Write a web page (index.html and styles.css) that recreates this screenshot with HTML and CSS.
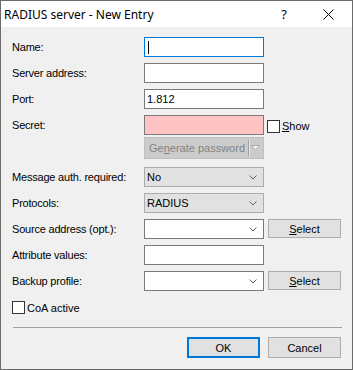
FILE: index.html
```html
<!DOCTYPE html>
<html lang="en">
<head>
    <meta charset="UTF-8">
    <title>RADIUS server - New Entry</title>
    <link rel="stylesheet" href="styles.css">
</head>
<body>
    <div class="window">
        <div class="titlebar">
            <span class="title">RADIUS server - New Entry</span>
            <span class="help">?</span>
            <svg class="close" width="11" height="11" viewBox="0 0 11 11">
                <path d="M0.5 0.5 L10.5 10.5 M10.5 0.5 L0.5 10.5" stroke="#000" stroke-width="1" fill="none"/>
            </svg>
        </div>

        <div class="content">
            <div class="row">
                <span class="label">Name:</span>
                <div class="input focused"><span class="caret"></span></div>
            </div>
            <div class="row">
                <span class="label">Server address:</span>
                <div class="input"></div>
            </div>
            <div class="row">
                <span class="label">Port:</span>
                <div class="input">1.812</div>
            </div>
            <div class="row">
                <span class="label">Secret:</span>
                <div class="input secret"></div>
                <div class="check-wrap show">
                    <span class="checkbox"></span>
                    <span><u>S</u>how</span>
                </div>
            </div>
            <div class="row gen-row">
                <span></span>
                <div class="split-btn">
                    <span class="split-text">Ge<u>n</u>erate password</span>
                    <span class="split-sep"></span>
                    <svg class="split-arrow" width="9" height="6" viewBox="0 0 9 6">
                        <polygon points="0.5,0.5 8.5,0.5 4.5,5" fill="#f4f4f4" stroke="#a8a8a8" stroke-width="1"/>
                    </svg>
                </div>
            </div>
            <div class="row after-gen">
                <span class="label">Message auth. required:</span>
                <div class="dropdown">No
                    <svg class="chev" width="8" height="5" viewBox="0 0 8 5"><polyline points="0.5,0.5 4,4 7.5,0.5" fill="none" stroke="#606060"/></svg>
                </div>
            </div>
            <div class="row">
                <span class="label">Protocols:</span>
                <div class="dropdown">RADIUS
                    <svg class="chev" width="8" height="5" viewBox="0 0 8 5"><polyline points="0.5,0.5 4,4 7.5,0.5" fill="none" stroke="#606060"/></svg>
                </div>
            </div>
            <div class="row">
                <span class="label">Source address (opt.):</span>
                <div class="input combo">
                    <svg class="chev" width="8" height="5" viewBox="0 0 8 5"><polyline points="0.5,0.5 4,4 7.5,0.5" fill="none" stroke="#606060"/></svg>
                </div>
                <div class="button select"><u>S</u>elect</div>
            </div>
            <div class="row">
                <span class="label">Attribute values:</span>
                <div class="input"></div>
            </div>
            <div class="row">
                <span class="label">Backup profile:</span>
                <div class="input combo">
                    <svg class="chev" width="8" height="5" viewBox="0 0 8 5"><polyline points="0.5,0.5 4,4 7.5,0.5" fill="none" stroke="#606060"/></svg>
                </div>
                <div class="button select"><u>S</u>elect</div>
            </div>

            <div class="check-wrap coa">
                <span class="checkbox"></span>
                <span>CoA active</span>
            </div>

            <div class="separator"></div>

            <div class="actions">
                <div class="button default">OK</div>
                <div class="button">Cancel</div>
            </div>
        </div>
    </div>
</body>
</html>
```

FILE: styles.css
```css
* {
    margin: 0;
    padding: 0;
    box-sizing: border-box;
}

body {
    font-family: 'Liberation Sans', Arial, sans-serif;
    font-size: 11px;
    color: #000;
    background: #f0f0f0;
}

.window {
    width: 353px;
    height: 370px;
    border: 1px solid #6b6b6b;
    background: #f0f0f0;
    display: flex;
    flex-direction: column;
}

/* Title bar */
.titlebar {
    height: 26px;
    background: #fff;
    display: flex;
    align-items: center;
    padding-left: 3px;
    flex-shrink: 0;
}

.title {
    font-family: 'Noto Sans', sans-serif;
    font-size: 12px;
    flex: 1;
}

.help {
    font-family: 'Noto Sans', sans-serif;
    font-size: 13px;
    margin-right: 36px;
}

.close {
    margin-right: 18px;
}

/* Form */
.content {
    padding: 10px 11px 0 11px;
    display: flex;
    flex-direction: column;
}

.row {
    display: grid;
    grid-template-columns: 128px 120px 73px;
    column-gap: 4px;
    align-items: center;
    height: 20px;
}

.row + .row {
    margin-top: 6px;
}

.row.gen-row {
    margin-top: 2px;
    height: 22px;
}

.row.after-gen {
    margin-top: 8px;
}

.label {
    white-space: nowrap;
    letter-spacing: -0.2px;
}

.input {
    height: 20px;
    border: 1px solid #7a7a7a;
    background: #fff;
    padding-left: 2px;
    display: flex;
    align-items: center;
    position: relative;
}

.input.focused {
    border-color: #0078d7;
}

.caret {
    width: 1px;
    height: 13px;
    background: #000;
    margin-left: 1px;
}

.input.secret {
    background: #ffc3c3;
}

.input.combo .chev,
.dropdown .chev {
    position: absolute;
    right: 6px;
    top: 7px;
}

.dropdown {
    height: 20px;
    border: 1px solid #adadad;
    background: #e1e1e1;
    padding-left: 2px;
    display: flex;
    align-items: center;
    position: relative;
}

.split-btn {
    height: 22px;
    border: 1px solid #bfbfbf;
    background: #cccccc;
    color: #838383;
    display: flex;
    align-items: center;
    position: relative;
}

.split-text {
    padding-left: 4px;
    width: 103px;
    white-space: nowrap;
}

.split-sep {
    width: 1px;
    height: 16px;
    background: #a0a0a0;
    box-shadow: 1px 0 0 #e6e6e6;
}

.split-arrow {
    margin-left: 2px;
}

.check-wrap {
    display: flex;
    align-items: center;
    gap: 2px;
}

.check-wrap.show {
    margin-left: -1px;
    margin-top: 2px;
}

.checkbox {
    width: 13px;
    height: 13px;
    border: 1px solid #333;
    background: #fff;
    display: inline-block;
}

.check-wrap.coa {
    margin-top: 10px;
    height: 13px;
}

.button {
    height: 21px;
    border: 1px solid #adadad;
    background: #e1e1e1;
    display: flex;
    align-items: center;
    justify-content: center;
}

.button.select {
    height: 19px;
    align-self: start;
}

.button.default {
    border: 2px solid #0078d7;
}

.separator {
    margin-top: 13px;
    border-top: 1px solid #a0a0a0;
    width: 329px;
    margin-left: 1px;
}

.actions {
    margin-top: 9px;
    display: flex;
    justify-content: flex-end;
    gap: 8px;
}

.actions .button {
    width: 73px;
}
```
